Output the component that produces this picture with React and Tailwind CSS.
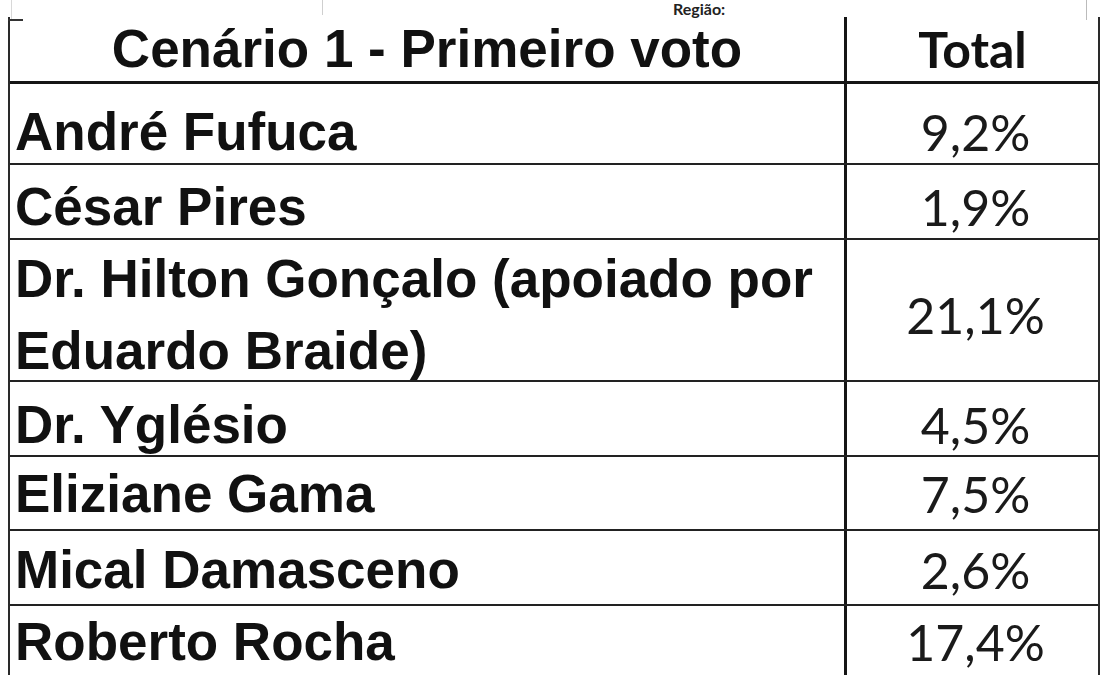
import React from 'react';

const rows = [
  { name: ['André Fufuca'], value: '9,2%', h: 'h-[81px]', pad: 'pt-[16px]' },
  { name: ['César Pires'], value: '1,9%', h: 'h-[75px]', pad: 'pt-[11px]' },
  { name: ['Dr. Hilton Gonçalo (apoiado por', 'Eduardo Braide)'], value: '21,1%', h: 'h-[142px]', pad: 'pt-[10px]' },
  { name: ['Dr. Yglésio'], value: '4,5%', h: 'h-[75px]', pad: 'pt-[13px]' },
  { name: ['Eliziane Gama'], value: '7,5%', h: 'h-[74px]', pad: 'pt-[2px]' },
  { name: ['Mical Damasceno'], value: '2,6%', h: 'h-[75px]', pad: 'pt-[5px]' },
  { name: ['Roberto Rocha'], value: '17,4%', h: 'h-[71px]', pad: 'pt-[3px]' },
];

const nameFont = "font-['Liberation_Sans',Arial,sans-serif]";
const numFont = "font-['Lato','Open_Sans',sans-serif]";

export default function App() {
  return (
    <div className="w-[1106px] h-[675px] overflow-hidden bg-white text-[#111]">
      {/* top strip, edge of the scanned page */}
      <div className="flex h-[17px] items-start">
        <div className="ml-[11px] h-[19px] w-px bg-[#d8d8d8]" />
        <div className="ml-[310px] h-[15px] w-px bg-[#cfcfcf]" />
        <p className={`${numFont} ml-[350px] text-[16px] font-bold leading-[17px] text-[#222]`}>
          Região:
        </p>
        <div className="ml-auto mr-[19px] h-[20px] w-px bg-[#bbbbbb]" />
      </div>

      {/* table */}
      <div className="relative ml-[8px] w-[1092px] border-l-2 border-r-2 border-[#2a2a2a]">
        <div className="absolute -left-[2px] top-[2px] h-[2px] w-[15px] bg-[#333]" />
        {/* header */}
        <div className="flex h-[67px] border-b-[3px] border-[#151515]">
          <div className={`${nameFont} flex w-[837px] items-center justify-center border-r-[3px] border-[#151515] text-[53px] font-bold leading-[72px]`}>
            Cenário 1 - Primeiro voto
          </div>
          <div className={`${numFont} flex flex-1 items-center justify-center text-[50px] font-bold leading-[72px]`}>
            Total
          </div>
        </div>

        {rows.map((r) => (
          <div key={r.value} className={`flex ${r.h} border-b-2 border-[#222]`}>
            <div className={`${nameFont} ${r.pad} flex w-[837px] flex-col justify-center border-r-[3px] border-[#151515] pl-[5px] text-[53px] font-bold leading-[72px]`}>
              {r.name.map((line) => (
                <span key={line} className="whitespace-nowrap">{line}</span>
              ))}
            </div>
            <div className={`${numFont} ${r.pad} flex flex-1 items-center justify-center pl-[6px] text-[50px] leading-[72px] text-[#1a1a1a]`}>
              {r.value}
            </div>
          </div>
        ))}
      </div>
    </div>
  );
}
